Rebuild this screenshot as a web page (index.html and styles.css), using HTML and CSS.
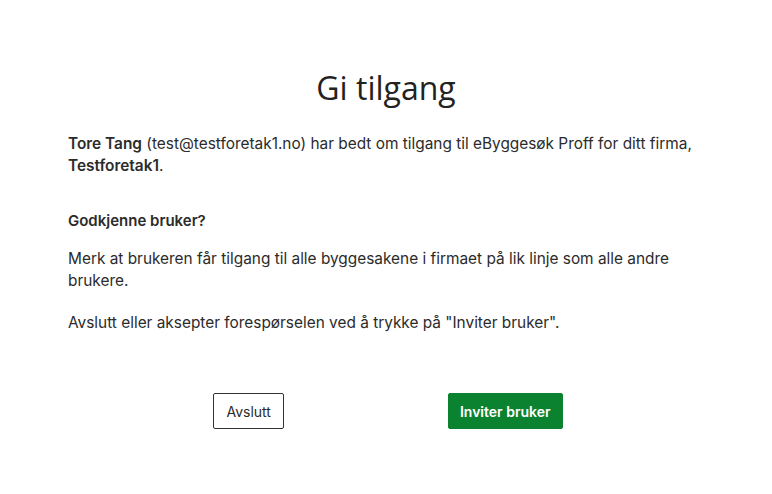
FILE: index.html
```html
<!DOCTYPE html>
<html lang="no">
<head>
    <meta charset="UTF-8">
    <meta name="viewport" content="width=device-width, initial-scale=1.0">
    <title>Gi tilgang</title>
    <link rel="stylesheet" href="styles.css">
</head>
<body>

    <div class="dialog">
        <h1>Gi tilgang</h1>
        <p><b>Tore Tang</b> (test@testforetak1.no) har bedt om tilgang til eByggesøk Proff for ditt firma, <b>Testforetak1</b>.</p>

        <h2>Godkjenne bruker?</h2>
        <p>Merk at brukeren får tilgang til alle byggesakene i firmaet på lik linje som alle andre brukere.</p>
        <p>Avslutt eller aksepter forespørselen ved å trykke på "Inviter bruker".</p>

        <div class="actions">
            <button class="btn btn-secondary">Avslutt</button>
            <button class="btn btn-primary">Inviter bruker</button>
        </div>
    </div>

</body>
</html>
```

FILE: styles.css
```css
body {
    margin: 0;
    font-family: Inter, sans-serif;
    background: #fff;
    color: #2b2b2b;
}
.dialog {
    max-width: 636px;
    margin: 0 auto;
    padding: 66px 0 0;
}
h1 {
    font-family: "Open Sans", sans-serif;
    font-weight: 400;
    font-size: 32px;
    text-align: center;
    margin: 0 0 24px;
    color: #222;
}
p {
    font-size: 15.4px;
    line-height: 22px;
    margin: 0 0 20px;
}
b {
    font-weight: 600;
}
h2 {
    font-size: 15px;
    font-weight: 600;
    margin: 34px 0 18px;
}
.actions {
    display: flex;
    justify-content: center;
    gap: 164px;
    margin-top: 59px;
    padding-left: 4px;
}
.btn {
    font-family: Inter, sans-serif;
    font-size: 14px;
    height: 36px;
    padding: 0 12px;
    border-radius: 2px;
    cursor: pointer;
}
.btn-secondary {
    background: #fff;
    border: 1px solid #333;
    color: #2b2b2b;
}
.btn-primary {
    background: #0b822f;
    border: 1px solid #0b822f;
    color: #fff;
    font-weight: 600;
    padding: 0 11px;
}
```
